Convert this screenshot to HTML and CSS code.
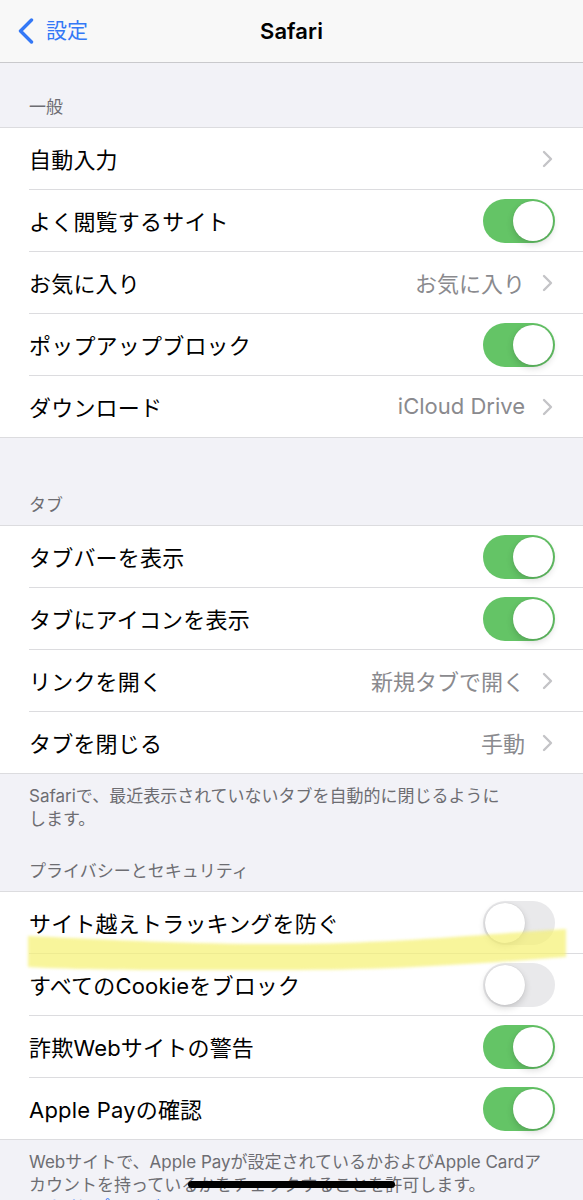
FILE: index.html
```html
<!DOCTYPE html>
<html lang="ja">
<head>
<meta charset="utf-8">
<title>Safari</title>
<link rel="stylesheet" href="styles.css">
</head>
<body>
<header class="nav">
  <div class="back">
    <svg class="back-icon" width="16" height="26" viewBox="0 0 16 26"><path d="M13.5 2 L2.5 13 L13.5 24" fill="none" stroke="#3478f6" stroke-width="3.4" stroke-linecap="round" stroke-linejoin="round"/></svg>
    <span class="back-label">設定</span>
  </div>
  <div class="title">Safari</div>
</header>

<div class="section-header first">一般</div>
<div class="group">
  <div class="row"><div class="row-inner"><span class="label">自動入力</span><span class="accessory"><svg class="chev" width="11" height="18" viewBox="0 0 11 18"><path d="M2 2 L9 9 L2 16" fill="none" stroke="#c4c4c7" stroke-width="2.4" stroke-linecap="round" stroke-linejoin="round"/></svg></span></div></div>
  <div class="row"><div class="row-inner"><span class="label">よく閲覧するサイト</span><span class="toggle on"><span class="knob"></span></span></div></div>
  <div class="row"><div class="row-inner"><span class="label">お気に入り</span><span class="accessory"><span class="value">お気に入り</span><svg class="chev" width="11" height="18" viewBox="0 0 11 18"><path d="M2 2 L9 9 L2 16" fill="none" stroke="#c4c4c7" stroke-width="2.4" stroke-linecap="round" stroke-linejoin="round"/></svg></span></div></div>
  <div class="row"><div class="row-inner"><span class="label">ポップアップブロック</span><span class="toggle on"><span class="knob"></span></span></div></div>
  <div class="row"><div class="row-inner"><span class="label">ダウンロード</span><span class="accessory"><span class="value">iCloud Drive</span><svg class="chev" width="11" height="18" viewBox="0 0 11 18"><path d="M2 2 L9 9 L2 16" fill="none" stroke="#c4c4c7" stroke-width="2.4" stroke-linecap="round" stroke-linejoin="round"/></svg></span></div></div>
</div>

<div class="section-header">タブ</div>
<div class="group">
  <div class="row"><div class="row-inner"><span class="label">タブバーを表示</span><span class="toggle on"><span class="knob"></span></span></div></div>
  <div class="row"><div class="row-inner"><span class="label">タブにアイコンを表示</span><span class="toggle on"><span class="knob"></span></span></div></div>
  <div class="row"><div class="row-inner"><span class="label">リンクを開く</span><span class="accessory"><span class="value">新規タブで開く</span><svg class="chev" width="11" height="18" viewBox="0 0 11 18"><path d="M2 2 L9 9 L2 16" fill="none" stroke="#c4c4c7" stroke-width="2.4" stroke-linecap="round" stroke-linejoin="round"/></svg></span></div></div>
  <div class="row"><div class="row-inner"><span class="label">タブを閉じる</span><span class="accessory"><span class="value">手動</span><svg class="chev" width="11" height="18" viewBox="0 0 11 18"><path d="M2 2 L9 9 L2 16" fill="none" stroke="#c4c4c7" stroke-width="2.4" stroke-linecap="round" stroke-linejoin="round"/></svg></span></div></div>
</div>
<div class="section-footer">Safariで、最近表示されていないタブを自動的に閉じるように<br>します。</div>

<div class="section-header after-footer">プライバシーとセキュリティ</div>
<div class="group privacy">
  <div class="row"><div class="row-inner"><span class="label">サイト越えトラッキングを防ぐ</span><span class="toggle"><span class="knob"></span></span></div></div>
  <div class="row"><div class="row-inner"><span class="label">すべてのCookieをブロック</span><span class="toggle"><span class="knob"></span></span></div></div>
  <div class="row"><div class="row-inner"><span class="label">詐欺Webサイトの警告</span><span class="toggle on"><span class="knob"></span></span></div></div>
  <div class="row"><div class="row-inner"><span class="label">Apple Payの確認</span><span class="toggle on"><span class="knob"></span></span></div></div>
  <svg class="marker" width="583" height="100" viewBox="0 0 583 100"><path d="M28 44 C 100 47 200 53 300 52 C 400 51 500 41 566 37 L 566 65 C 500 70 400 78 300 78 C 200 78 100 79 28 75 Z" fill="#f5f170" fill-opacity="0.7"/></svg>
</div>
<div class="section-footer">Webサイトで、Apple Payが設定されているかおよびApple Cardア<br>カウントを持っているかをチェックすることを許可します。<br><span class="link">Safariとプライバシーについて...</span></div>

<div class="home-indicator"></div>
</body>
</html>
```
FILE: styles.css
```css
html, body {
  margin: 0;
  padding: 0;
}
body {
  background: #f2f2f7;
  font-family: "Inter", "Noto Sans CJK JP", sans-serif;
  color: #000;
  width: 583px;
  position: relative;
  min-height: 1200px;
}
.nav {
  height: 62px;
  background: #f8f8f8;
  border-bottom: 1px solid #c9c9cc;
  display: flex;
  align-items: center;
  justify-content: center;
  position: relative;
}
.back {
  position: absolute;
  left: 18px;
  top: 17px;
  display: flex;
  align-items: center;
  gap: 12px;
}
.back-label {
  color: #3478f6;
  font-size: 21px;
  line-height: 28px;
}
.title {
  font-size: 22px;
  font-weight: 600;
  letter-spacing: 0.1px;
}
.section-header {
  color: #6d6d72;
  font-size: 17px;
  line-height: 20px;
  padding: 0 29px 10px;
  margin-top: 57px;
}
.section-header.first {
  margin-top: 34px;
}
.section-header.after-footer {
  margin-top: 31px;
}
.group {
  background: #fff;
  border-top: 1px solid #dcdcdf;
  border-bottom: 1px solid #dcdcdf;
  position: relative;
}
.row {
  padding-left: 29px;
}
.row-inner {
  height: 61px;
  border-bottom: 1px solid #dcdcdf;
  display: flex;
  align-items: center;
  justify-content: space-between;
  padding-right: 28px;
}
.row:last-of-type .row-inner {
  border-bottom: none;
  height: 61px;
}
.label {
  font-size: 22px;
  letter-spacing: 0.2px;
  position: relative;
  top: -1px;
}
.accessory {
  display: flex;
  align-items: center;
  gap: 17px;
  padding-right: 2px;
}
.value {
  font-size: 22px;
  color: #8a8a8e;
  position: relative;
  top: -1px;
}
.chev {
  display: block;
}
.toggle {
  width: 72px;
  height: 44px;
  border-radius: 22px;
  background: #e9e9eb;
  position: relative;
  box-sizing: border-box;
}
.toggle.on {
  background: #64c466;
}
.knob {
  position: absolute;
  top: 2px;
  left: 2px;
  width: 40px;
  height: 40px;
  border-radius: 50%;
  background: #fff;
  box-shadow: 0 3px 7px rgba(0, 0, 0, 0.16), 0 0 1px rgba(0, 0, 0, 0.15);
}
.toggle.on .knob {
  left: 30px;
}
.section-footer {
  color: #6d6d72;
  font-size: 17px;
  line-height: 22.5px;
  padding: 11px 29px 0;
}
.link {
  color: #3478f6;
}
.marker {
  position: absolute;
  left: 0;
  top: 0;
  pointer-events: none;
  filter: blur(1.5px);
}
.home-indicator {
  position: absolute;
  top: 1181px;
  left: 188px;
  width: 207px;
  height: 7px;
  border-radius: 4px;
  background: #000;
}
```
